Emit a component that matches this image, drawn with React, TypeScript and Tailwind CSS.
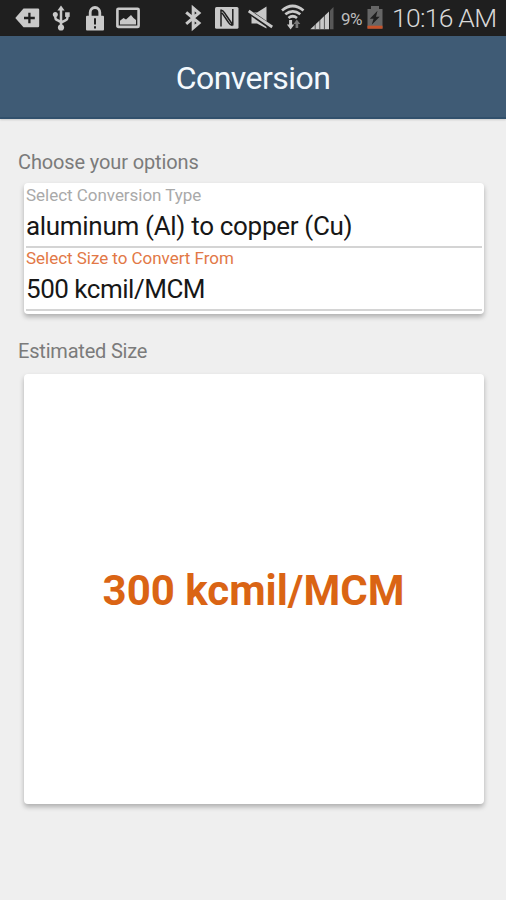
import React from "react";

const ICON = "#c9c9c9";

function StatusBar() {
  return (
    <div className="flex h-9 shrink-0 items-center bg-[#1f1f1f]">
      <svg className="ml-[15px] shrink-0" width="25" height="36" viewBox="0 0 25 36">
        <path d="M8.5 8.5H23a1.2 1.2 0 0 1 1.2 1.2v16.4a1.2 1.2 0 0 1-1.2 1.2H8.5L.3 18z" fill={ICON} />
        <path d="M14.4 12.7v10.6M9 18h10.8" stroke="#1f1f1f" strokeWidth="2.3" />
      </svg>
      <svg className="ml-[12px] shrink-0" width="19" height="36" viewBox="0 0 19 36" fill={ICON}>
        <path d="M9 5.500l3.600 5H5.400z" />
        <circle cx="9" cy="27.500" r="3.100" />
        <circle cx="3.300" cy="14.500" r="2.500" />
        <rect x="13.100" y="12.300" width="4.600" height="4.600" />
        <path d="M9 9v18M3.300 15v2.500q0 1.800 1.700 2.500L9 22.200M15.400 15.500v2.200q0 1.700-1.600 2.400L9 22.700" fill="none" stroke={ICON} strokeWidth="2.500" />
      </svg>
      <svg className="ml-[15px] shrink-0" width="18" height="36" viewBox="0 0 18 36">
        <path d="M4.200 17V12.500a4.800 5 0 0 1 9.600 0V17" fill="none" stroke={ICON} strokeWidth="2.800" />
        <rect x="0" y="15.800" width="18" height="14.700" rx="1" fill={ICON} />
        <path d="M9 18.200v6.300M9 26.200v2.200" stroke="#1f1f1f" strokeWidth="2" />
      </svg>
      <svg className="ml-[12px] shrink-0" width="24" height="36" viewBox="0 0 24 36">
        <rect x="1.400" y="8.700" width="21.200" height="18.200" rx="1" fill="none" stroke={ICON} strokeWidth="2.600" />
        <path d="M4 24.500v-3.700l3.500-2.800 2.500 1.500 5-4.500 2.500 3 2.500 2v4.500z" fill={ICON} />
      </svg>

      <svg className="ml-[45px] shrink-0" width="17" height="36" viewBox="0 0 17 36">
        <path d="M1.200 12.300L14 23l-5.800 5V8l5.800 5L1.200 23.800" fill="none" stroke={ICON} strokeWidth="3" />
      </svg>
      <svg className="ml-[13px] shrink-0" width="24" height="36" viewBox="0 0 24 36">
        <rect x="0" y="7" width="23.500" height="21.700" rx="1.500" fill={ICON} />
        <path d="M6 26.500V9.500M6 10c3 .5 3.500 3 5 5l6.500 9.500M17.800 9v16.500M17.500 25.500c-3-.5-3.500-2.500-5-4.500L7 12.800" fill="none" stroke="#1f1f1f" strokeWidth="1.500" />
      </svg>
      <svg className="ml-[9px] shrink-0" width="26" height="36" viewBox="0 0 26 36">
        <path d="M3.500 12.500H9l9.500-6v22L9 23.500H3.500z" fill={ICON} />
        <path d="M1 11.800L23.500 27.500" stroke="#1f1f1f" strokeWidth="4.800" />
        <path d="M.7 11L24.200 27" stroke={ICON} strokeWidth="2.800" />
      </svg>
      <svg className="ml-[7px] shrink-0" width="24" height="36" viewBox="0 0 24 36">
        <path d="M1 10.500q10.500-9 21.500 0M4.300 14.300q7.500-6 15 0M7.500 18q4.200-3.500 8.500 0" fill="none" stroke={ICON} strokeWidth="2.700" />
        <path d="M8.100 20h3v4.500h2.200l-3.700 5-3.700-5h2.200z" fill={ICON} />
        <path d="M15.800 19.500l3.500 4.500h-2.100v4h-2.600v-4h-2z" fill="#777777" />
      </svg>
      <svg className="ml-[5px] shrink-0" width="25" height="36" viewBox="0 0 25 36">
        <path d="M.3 29.200L19 11.500v17.700z" fill={ICON} />
        <path d="M20 10.500l3.500-3.500v22.200H20z" fill="#585858" />
        <path d="M5.200 22v7M9.800 18v11M14.400 14v15M19.500 10v19" stroke="#1f1f1f" strokeWidth=".7" />
      </svg>
      <span className="ml-[6px] w-[22px] shrink-0 whitespace-nowrap pt-0.5 text-[17px] leading-none tracking-[-0.500px] text-[#bdbdbd]">9%</span>
      <svg className="ml-[4px] shrink-0" width="16" height="36" viewBox="0 0 16 36">
        <path d="M4 6h8v3h3.500v19.500H.5V9H4z" fill="#666666" />
        <rect x=".5" y="25.700" width="15" height="3" fill="#c5522a" />
        <path d="M10.500 10.800L2.800 18.700h3.800l-1.900 6.100 8-8.100H9z" fill="#1f1f1f" />
      </svg>
      <span className="ml-[9px] shrink-0 whitespace-nowrap text-[26.500px] leading-9 font-light tracking-[-0.750px] text-[#d8d8d8]">10:16 AM</span>
    </div>
  );
}

type FieldProps = {
  label: string;
  value: string;
  active?: boolean;
};

function Field({ label, value, active }: FieldProps) {
  return (
    <div className="mx-0.5 h-[63px] border-b-2 border-[#d4d4d4]">
      <div className={`h-[22px] text-[17px] leading-5 tracking-[-0.030px] whitespace-nowrap ${active ? "text-[#e27846]" : "text-[#a9a9a9]"}`}>{label}</div>
      <div className={`h-[39px] text-[26px] leading-[39px] whitespace-nowrap text-[#171717] ${active ? "tracking-[-0.480px]" : "tracking-[-0.310px]"}`}>{value}</div>
    </div>
  );
}

export default function App() {
  return (
    <div className="flex h-[900px] w-[506px] flex-col overflow-hidden bg-[#efefef] font-['Roboto',sans-serif]">
      <StatusBar />
      <header className="flex h-[83px] shrink-0 items-center justify-center border-b-2 border-[#31506c] bg-[#3f5b75] pt-[3px] shadow-[0_1px_2px_rgba(0,0,0,0.15)]">
        <h1 className="text-[32px] leading-10 tracking-[-0.550px] text-[#f4f9fd]">Conversion</h1>
      </header>
      <main className="flex flex-col">
        <h2 className="mt-[31px] ml-[18px] h-6 text-[20px] leading-6 tracking-[-0.130px] text-[#7b7b7b]">Choose your options</h2>
        <section className="mt-[9px] ml-6 h-[131px] w-[460px] rounded-[4px] bg-white pt-0.5 shadow-[0_3px_5px_rgba(0,0,0,0.27)]">
          <Field label="Select Conversion Type" value="aluminum (Al) to copper (Cu)" />
          <Field label="Select Size to Convert From" value="500 kcmil/MCM" active />
        </section>
        <h2 className="mt-[25px] ml-[18px] h-6 text-[20px] leading-6 tracking-[-0.200px] text-[#7b7b7b]">Estimated Size</h2>
        <section className="mt-[11px] ml-6 flex h-[430px] w-[460px] items-center justify-center rounded-[4px] bg-white shadow-[0_3px_5px_rgba(0,0,0,0.27)]">
          <p className="pt-1 pr-px text-[42px] leading-none font-bold whitespace-nowrap text-[#da6414]">300 kcmil/MCM</p>
        </section>
      </main>
    </div>
  );
}
